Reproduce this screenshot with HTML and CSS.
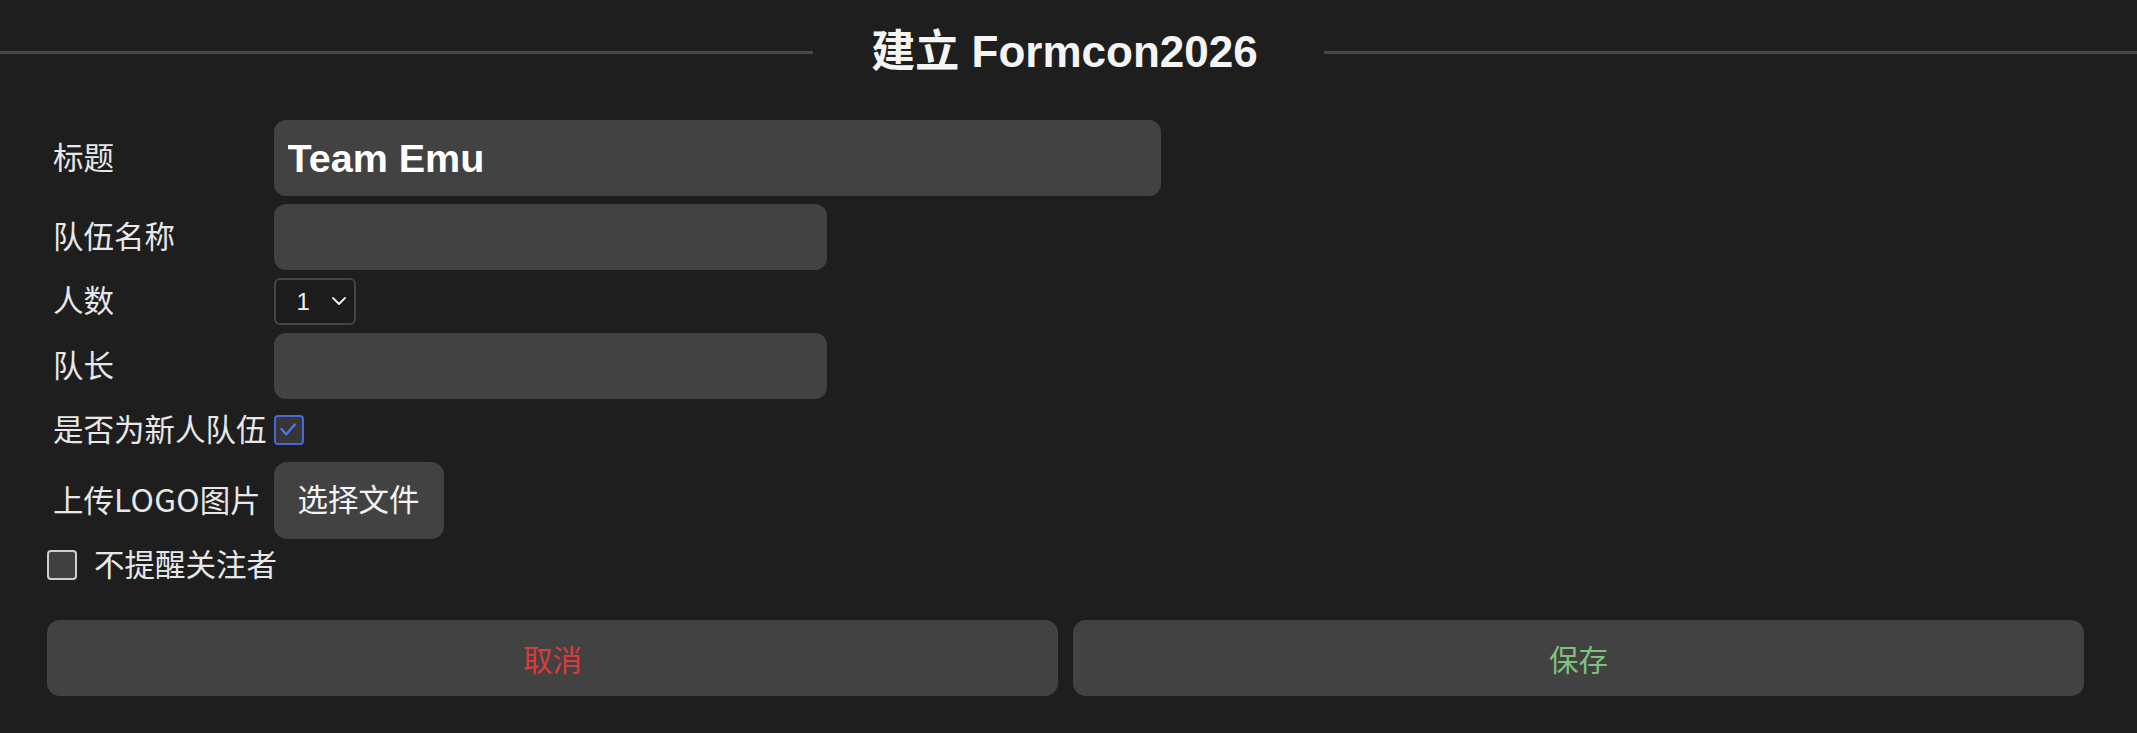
FILE: index.html
```html
<!DOCTYPE html>
<html lang="zh-CN">
<head>
<meta charset="utf-8">
<title>建立 Formcon2026</title>
<link rel="stylesheet" href="styles.css">
</head>
<body>
<header class="page-head">
  <span class="rule"></span>
  <h1 class="page-title">建立 Formcon2026</h1>
  <span class="rule"></span>
</header>
<form class="form">
  <div class="fields">
    <label class="field-label">标题</label>
    <input class="text-input text-input--title" type="text" value="Team Emu">

    <label class="field-label">队伍名称</label>
    <input class="text-input text-input--medium" type="text">

    <label class="field-label">人数</label>
    <div class="select-wrap">
      <select class="select"><option>1</option></select>
      <svg class="chevron" width="14" height="8" viewBox="0 0 14 8"><polyline points="1,1 7,7 13,1" fill="none" stroke="#f2f2f2" stroke-width="1.8" stroke-linecap="round" stroke-linejoin="round"/></svg>
    </div>

    <label class="field-label">队长</label>
    <input class="text-input text-input--medium" type="text">

    <label class="field-label">是否为新人队伍</label>
    <span class="check check--on">
      <svg width="30" height="30" viewBox="0 0 30 30"><polyline points="8.5,15 13.2,20.3 21.8,10.6" fill="none" stroke="#5372e4" stroke-width="2.4" stroke-linecap="round" stroke-linejoin="round"/></svg>
    </span>

    <label class="field-label">上传<span class="latin">LOGO</span>图片</label>
    <button class="file-btn" type="button">选择文件</button>
  </div>

  <div class="notify-row">
    <span class="check check--off"></span>
    <span class="notify-label">不提醒关注者</span>
  </div>

  <div class="actions">
    <button class="action action--cancel" type="button">取消</button>
    <button class="action action--save" type="button">保存</button>
  </div>
</form>
</body>
</html>
```
FILE: styles.css
```css
html, body {
  margin: 0;
  padding: 0;
  background: #1e1e1e;
}

body {
  font-family: "Noto Sans CJK SC", "Liberation Sans", sans-serif;
  color: #e8e8e8;
}

.page-head {
  display: flex;
  align-items: center;
  padding-top: 27px;
}

.rule {
  flex: 1;
  height: 3px;
  background: #474747;
}

.rule:first-child {
  margin-right: -3px;
}

.rule:last-child {
  margin-left: 3px;
}

.page-title {
  margin: 0 62px;
  font-family: "Liberation Sans", "Noto Sans CJK SC", sans-serif;
  font-weight: bold;
  font-size: 44px;
  line-height: 50px;
  color: #f4f4f4;
  white-space: nowrap;
  transform: translateX(-1px);
}

.form {
  padding: 0 53px 0 47px;
  margin-top: 43px;
}

.fields {
  display: grid;
  grid-template-columns: max-content 1fr;
  column-gap: 7px;
  row-gap: 7.5px;
  align-items: center;
  justify-items: start;
  margin-left: 6px;
}

.field-label {
  box-sizing: border-box;
  font-size: 30.5px;
  line-height: 44px;
  padding-bottom: 4px;
  color: #e8e8e8;
  white-space: nowrap;
}

.latin {
  font-size: 31.5px;
  letter-spacing: 0.3px;
}

.text-input {
  box-sizing: border-box;
  border: none;
  outline: none;
  background: #424242;
  border-radius: 12px;
  color: #ffffff;
  padding: 0 14px;
  margin: 0;
}

.text-input--title {
  width: 887px;
  height: 76px;
  font-family: "Liberation Sans", sans-serif;
  font-weight: bold;
  font-size: 39.5px;
}

.text-input--medium {
  width: 553px;
  height: 66px;
  font-size: 28px;
}

.select-wrap {
  box-sizing: border-box;
  width: 82px;
  height: 47px;
  display: flex;
  align-items: center;
  border: 2.7px solid #454545;
  border-radius: 6px;
  background: #1c1c1c;
  padding: 0 8px 0 21px;
}

.select {
  appearance: none;
  -webkit-appearance: none;
  border: none;
  outline: none;
  background: transparent;
  color: #f2f2f2;
  font-family: "Liberation Sans", sans-serif;
  font-size: 24px;
  padding: 0;
  margin: 0;
  flex: 1;
}

.chevron {
  display: block;
  flex: none;
}

.check {
  box-sizing: border-box;
  width: 30px;
  height: 30px;
  border-radius: 4px;
  display: block;
}

.check svg {
  display: block;
  margin: -2.7px;
}

.check--on {
  border: 2.7px solid #4a67d9;
  background: #363636;
}

.check--off {
  border: 2.7px solid #cfcfcf;
  background: #404040;
}

.file-btn {
  box-sizing: border-box;
  height: 77px;
  padding: 0 24px 4px;
  border: none;
  border-radius: 13px;
  background: #424242;
  color: #f4f4f4;
  font-family: "Noto Sans CJK SC", sans-serif;
  font-size: 30.5px;
  margin: 0;
}

.notify-row {
  display: flex;
  align-items: center;
  gap: 17px;
  margin-top: 2px;
}

.notify-label {
  font-size: 30.5px;
  line-height: 44px;
  padding-bottom: 4px;
  color: #e8e8e8;
}

.actions {
  display: grid;
  grid-template-columns: 1fr 1fr;
  gap: 15px;
  margin-top: 31px;
}

.action {
  height: 76px;
  border: none;
  border-radius: 13px;
  background: #424242;
  font-family: "Noto Sans CJK SC", sans-serif;
  font-size: 29.5px;
  padding: 0;
  margin: 0;
}

.action--cancel {
  color: #d93c3a;
}

.action--save {
  color: #7cc47a;
}
```
